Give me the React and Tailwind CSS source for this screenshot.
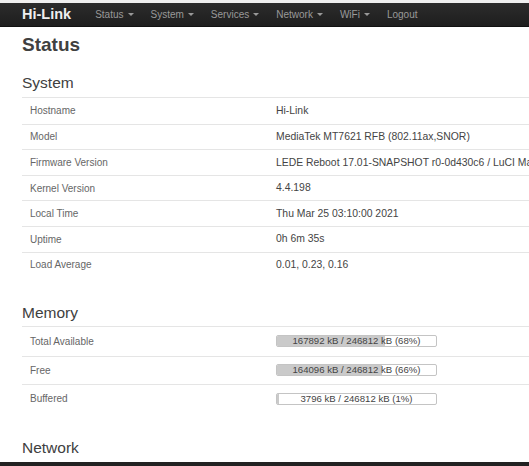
import React from 'react';

const systemRows = [
    ['Hostname', 'Hi-Link'],
    ['Model', 'MediaTek MT7621 RFB (802.11ax,SNOR)'],
    ['Firmware Version', 'LEDE Reboot 17.01-SNAPSHOT r0-0d430c6 / LuCI Master (git-21.084.42347-4e5e5b2)'],
    ['Kernel Version', '4.4.198'],
    ['Local Time', 'Thu Mar 25 03:10:00 2021'],
    ['Uptime', '0h 6m 35s'],
    ['Load Average', '0.01, 0.23, 0.16'],
];

const memoryRows = [
    ['Total Available', '167892 kB / 246812 kB (68%)', 68],
    ['Free', '164096 kB / 246812 kB (66%)', 66],
    ['Buffered', '3796 kB / 246812 kB (1%)', 1],
];

const navItems = [
    ['Status', true],
    ['System', true],
    ['Services', true],
    ['Network', true],
    ['WiFi', true],
    ['Logout', false],
];

function Caret() {
    return <span className="inline-block ml-[4px] align-middle w-0 h-0 border-l-[3px] border-r-[3px] border-t-[3px] border-l-transparent border-r-transparent border-t-[#999]" />;
}

function App() {
    return (
        <div className="w-[529px] h-[466px] overflow-hidden bg-white text-[#444] font-['Liberation_Sans',Arial,sans-serif]">
            <div className="h-[3px] bg-[#f0f0f0]" />
            <div className="h-[24px] bg-gradient-to-b from-[#2c2c2c] to-[#1e1e1e] border-b border-[#111] flex items-center pl-[22px]">
                <span className="text-[14.5px] font-bold text-[#eee] mr-[24px] leading-none">Hi-Link</span>
                <div className="flex items-center gap-[17px] text-[10px] text-[#999] leading-none">
                    {navItems.map(([label, drop]) => (
                        <span key={label} className="flex items-center">
                            {label}
                            {drop && <Caret />}
                        </span>
                    ))}
                </div>
            </div>

            <div className="pl-[22px] w-[700px]">
                <h1 className="mt-[7px] text-[19px] leading-[22px] font-bold text-[#404040]">Status</h1>

                <h2 className="mt-[17px] text-[15.5px] leading-[20px] text-[#404040] pb-[4px]">System</h2>
                <div className="border-t border-[#e5e5e5]">
                    {systemRows.map(([k, v], i) => (
                        <div key={k} className={'flex items-center h-[25.6px] ' + (i > 0 ? 'border-t border-[#e5e5e5]' : '')}>
                            <div className="w-[246px] pl-[8px] text-[10px] text-[#666] whitespace-nowrap">{k}</div>
                            <div className="pl-[8px] text-[10.4px] text-[#444] whitespace-nowrap">{v}</div>
                        </div>
                    ))}
                </div>

                <h2 className="mt-[26px] text-[15.5px] leading-[20px] text-[#404040] pb-[3px]">Memory</h2>
                <div className="border-t border-[#e5e5e5]">
                    {memoryRows.map(([k, v, pct], i) => (
                        <div key={k} className={'flex items-center h-[28.5px] text-[10px] ' + (i > 0 ? 'border-t border-[#e5e5e5]' : '')}>
                            <div className="w-[246px] pl-[8px] text-[#666] whitespace-nowrap">{k}</div>
                            <div className="ml-[8px] relative w-[161px] h-[12px] border border-[#c4c4c4] rounded-[2px] bg-white overflow-hidden">
                                <div className="absolute left-0 top-0 bottom-0 bg-[#cacaca]" style={{ width: pct + '%' }} />
                                <div className="relative text-center text-[9.6px] leading-[10px] text-[#444] whitespace-nowrap">{v}</div>
                            </div>
                        </div>
                    ))}
                </div>

                <h2 className="mt-[25px] text-[15.5px] leading-[20px] text-[#404040]">Network</h2>
            </div>
            <div className="mt-[4px] h-[4px] bg-[#222]" />
        </div>
    );
}

export default App;
